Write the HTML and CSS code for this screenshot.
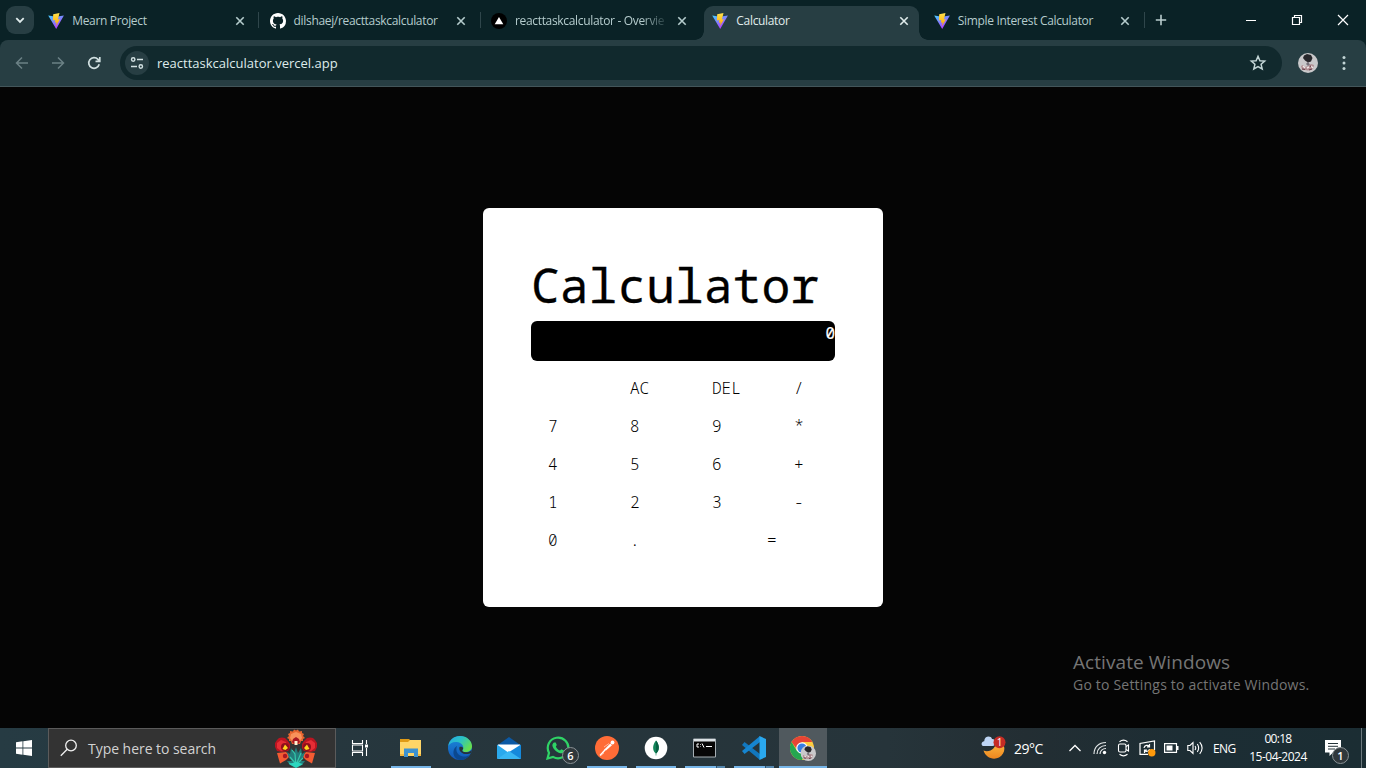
FILE: index.html
```html
<!DOCTYPE html>
<html lang="en">
<head>
<meta charset="utf-8">
<title>Calculator</title>
<link rel="stylesheet" href="styles.css">
</head>
<body>
<svg class="defs" width="0" height="0" aria-hidden="true">
  <defs>
    <linearGradient id="vg" x1="0" y1="0" x2="0.6" y2="1"><stop offset="0" stop-color="#41d1ff"/><stop offset="1" stop-color="#bd34fe"/></linearGradient>
    <linearGradient id="vb" x1="0" y1="0" x2="0" y2="1"><stop offset="0" stop-color="#ffe04a"/><stop offset="1" stop-color="#ffa800"/></linearGradient>
    <symbol id="vite" viewBox="0 0 16 16"><path d="M.2 2.4 8.2 16 15.9 2.4 8 3.7Z" fill="url(#vg)"/><path d="M11.5.1 5.2 1.2 4.900 7.500 7.300 7.100 6.900 9.700 8.600 9.200 8 13 12 6.200 9.900 6.500Z" fill="url(#vb)"/></symbol>
    <symbol id="close" viewBox="0 0 16 16"><path d="M4.3 4.3 11.7 11.7M11.7 4.3 4.3 11.7" stroke="currentColor" stroke-width="1.6" fill="none"/></symbol>
    <symbol id="face" viewBox="0 0 20 20"><circle cx="10" cy="10" r="10" fill="#c9c8ca"/><path d="M6 2.5 9 1l4 1 1.5 3-1.5 3.5-3 1-3-2-2-2.500Z" fill="#28272b"/><path d="M10 8.500 12 12l-2 1-2-2Z" fill="#77717a"/><path d="M3 13 5 12l2 2 3-1 3-2 3 1-1 4-5 1.500-6-1Z" fill="#b08e92"/><path d="M5 13l2 2M9 15l2-1M13 13l2 2" stroke="#f0e6e6" stroke-width="1.400"/><path d="M4 16l3 .5M11 17l3-1M12 13l1 .5" stroke="#693c4a" stroke-width="1.200"/></symbol>
  </defs>
</svg>
<div class="screen">
  <header class="tabstrip">
    <button class="tabsearch"><svg width="12" height="12" viewBox="0 0 12 12"><path d="M2.300 4.200 6 7.900 9.700 4.200" fill="none" stroke="#e0ecec" stroke-width="1.800"/></svg></button>
    <div class="tabs">
      <div class="tab sep"><svg class="fav"><use href="#vite"/></svg><span class="title"><span>Mearn Project</span></span><svg class="x"><use href="#close"/></svg></div>
      <div class="tab sep"><svg class="fav" viewBox="0 0 16 16"><path fill="#fff" d="M8 0C3.580 0 0 3.580 0 8c0 3.540 2.290 6.530 5.470 7.590.4.070.550-.170.550-.380 0-.190-.010-.820-.010-1.490-2.010.370-2.530-.490-2.690-.940-.090-.230-.480-.940-.820-1.130-.280-.150-.680-.520-.010-.530.630-.010 1.080.580 1.230.820.720 1.210 1.870.870 2.330.660.070-.520.280-.870.510-1.070-1.780-.200-3.640-.890-3.640-3.950 0-.870.310-1.590.820-2.150-.080-.200-.360-1.020.080-2.120 0 0 .670-.210 2.200.820.640-.180 1.320-.270 2-.270s1.360.090 2 .270c1.530-1.040 2.200-.820 2.200-.820.440 1.100.160 1.920.080 2.120.510.560.820 1.270.820 2.150 0 3.070-1.870 3.750-3.650 3.950.290.250.540.730.540 1.480 0 1.070-.010 1.930-.010 2.200 0 .210.150.460.550.380A8.010 8.010 0 0 0 16 8c0-4.420-3.580-8-8-8Z"/></svg><span class="title"><span>dilshaej/reacttaskcalculator</span></span><svg class="x"><use href="#close"/></svg></div>
      <div class="tab"><svg class="fav" viewBox="0 0 16 16"><circle cx="8" cy="8" r="8" fill="#000"/><path d="M8 4 12.300 11.200H3.700Z" fill="#fff"/></svg><span class="title fade"><span>reacttaskcalculator - Overvie</span></span><svg class="x"><use href="#close"/></svg></div>
      <div class="tab active"><svg class="fav"><use href="#vite"/></svg><span class="title"><span>Calculator</span></span><svg class="x"><use href="#close"/></svg></div>
      <div class="tab sep"><svg class="fav"><use href="#vite"/></svg><span class="title"><span>Simple Interest Calculator</span></span><svg class="x"><use href="#close"/></svg></div>
    </div>
    <svg class="plus" width="12" height="12" viewBox="0 0 12 12"><path d="M6 .8V11.200M.8 6H11.200" stroke="#b9cdce" stroke-width="1.600"/></svg>
    <div class="winbtns">
      <svg width="12" height="12" viewBox="0 0 12 12"><path d="M1 6.500H11" stroke="#fff"/></svg>
      <svg width="12" height="12" viewBox="0 0 12 12"><path d="M1.500 3.500H8.500V10.500H1.500ZM3.500 3.500V1.500H10.500V8.500H8.500" fill="none" stroke="#fff" stroke-width="1.200"/></svg>
      <svg width="12" height="12" viewBox="0 0 12 12"><path d="M1 1 11 11M11 1 1 11" stroke="#fff" stroke-width="1.200"/></svg>
    </div>
  </header>
  <nav class="toolbar">
    <div class="navicons">
      <svg width="16" height="16" viewBox="0 0 16 16" class="dim"><path d="M14 8H3M8 2.500 2.500 8 8 13.500"/></svg>
      <svg width="16" height="16" viewBox="0 0 16 16" class="dim"><path d="M2 8H13M8 2.500 13.500 8 8 13.500"/></svg>
      <svg width="16" height="16" viewBox="0 0 16 16" class="lit"><path d="M13.200 9.300A5.300 5.300 0 1 1 12 4.400L13.300 5.800M13.800 2V6.300H9.500"/></svg>
    </div>
    <div class="omnibox">
      <span class="site"><svg width="16" height="16" viewBox="0 0 16 16"><path d="M8 4.500H14M2 11.500H8" stroke="#d3e2e3" stroke-width="1.500"/><circle cx="4.200" cy="4.500" r="1.700" fill="none" stroke="#d3e2e3" stroke-width="1.400"/><circle cx="11.800" cy="11.500" r="1.700" fill="none" stroke="#d3e2e3" stroke-width="1.400"/></svg></span>
      <span class="url">reacttaskcalculator.vercel.app</span>
      <svg class="star" width="18" height="18" viewBox="0 0 18 18"><path d="M9 2.300 10.900 6.700 15.700 7.100 12.100 10.300 13.200 15 9 12.500 4.800 15 5.900 10.300 2.300 7.100 7.100 6.700Z" fill="none" stroke="#c3d5d6" stroke-width="1.500"/></svg>
    </div>
    <svg class="avatar" width="20" height="20"><use href="#face"/></svg>
    <svg class="dots" width="4" height="16" viewBox="0 0 4 16"><g fill="#c3d5d6"><circle cx="2" cy="2.600" r="1.500"/><circle cx="2" cy="8" r="1.500"/><circle cx="2" cy="13.400" r="1.500"/></g></svg>
  </nav>
  <main class="page">
    <section class="card">
      <h1>Calculator</h1>
      <div class="display">0</div>
      <div class="keys">
        <span></span><span>AC</span><span>DEL</span><span>/</span>
        <span>7</span><span>8</span><span>9</span><span>*</span>
        <span>4</span><span>5</span><span>6</span><span>+</span>
        <span>1</span><span>2</span><span>3</span><span>-</span>
        <span>0</span><span>.</span><span class="eq">=</span>
      </div>
    </section>
    <aside class="activate"><p class="a1">Activate Windows</p><p class="a2">Go to Settings to activate Windows.</p></aside>
  </main>
  <footer class="taskbar">
    <div class="start"><svg width="16" height="16" viewBox="0 0 16 16"><path fill="#fff" d="M0 2.200 6.500 1.300V7.500H0ZM7.300 1.200 16 0V7.500H7.300ZM0 8.400H6.500V14.700L0 13.800ZM7.300 8.400H16V16L7.300 14.800Z"/></svg></div>
    <div class="search">
      <svg width="18" height="18" viewBox="0 0 18 18"><circle cx="11" cy="6.500" r="5.300" fill="none" stroke="#f0f0f0" stroke-width="1.300"/><path d="M7.200 10.300.8 16.800" stroke="#f0f0f0" stroke-width="1.300"/></svg>
      <span class="ph">Type here to search</span>
      <svg class="flower" width="44" height="39" viewBox="0 0 44 39">
        <path d="M14 5 16 4 16 2 19 2.500 20 .5 22 1.500 24 .5 25 2.500 28 2 28 4 30 5 29 7 31 9 29 10 29 12 27 12 26 15H18L17 12 15 12 15 10 13 9 15 7Z" fill="#e8662f"/>
        <path d="M17 5 22 3 27 5 28 9 25 13H19L16 9Z" fill="#f9925b"/><path d="M18 13 19 10 22 8 25 10 26 13 24 15H20Z" fill="#a81722"/><path d="M20.500 12h3v4h-3Z" fill="#fff0cf"/>
        <path d="M1 14 3 11 5 9 8 8.500 11 9 14 12 16 15 16 19 14 22 8 23 3 22 1 18Z" fill="#b91521"/><path d="M43 14 41 11 39 9 36 8.500 33 9 30 12 28 15 28 19 30 22 36 23 41 22 43 18Z" fill="#b91521"/>
        <path d="M3 14 7 11 12 13 14 18 12 21 7 22 3 19Z" fill="#e62d35"/><path d="M41 14 37 11 32 13 30 18 32 21 37 22 41 19Z" fill="#e62d35"/>
        <circle cx="11" cy="18" r="4" fill="#8f0f1a"/><circle cx="33" cy="18" r="4" fill="#8f0f1a"/>
        <path d="M11 15.500 14 19 11.500 21 8.500 20Z" fill="#ffd51e"/><path d="M33 15.500 35.500 20 32 21 30 19Z" fill="#ffd51e"/>
        <path d="M3 24 12 23 16 27 12 31 6 34.500Z" fill="#f45b32"/><path d="M41 24 32 23 28 27 32 31 38 34.500Z" fill="#f45b32"/>
        <circle cx="11" cy="27" r="2.200" fill="#a81722"/><circle cx="33" cy="27" r="2.200" fill="#a81722"/>
        <path d="M22 18 24 24 27 19 28 25 31 23 29 29 26 32 31 32 28 36 22 39 16 36 13 32 18 32 15 29 13 23 16 25 17 19 20 24Z" fill="#237c7b"/>
        <path d="M22 38 21 25 18 21M22 36 27 24M22 35 16 28M22 36 29 29M22 37 15 34" stroke="#35c9ad" stroke-width="1.200" fill="none"/><path d="M15 35 22 33 29 35 22 39Z" fill="#2cd7bf"/>
      </svg>
    </div>
    <div class="taskview"><svg width="18" height="16" viewBox="0 0 18 16"><path d="M1.500 0V3.500H11.500V0M1.500 16V12.500H11.500V16M1.500 5H11.500V11H1.500ZM15.500 0V4M15.500 8V16" fill="none" stroke="#fff" stroke-width="1.100"/><path d="M14 4.500h3v3h-3Z" fill="#fff"/></svg></div>
    <div class="apps">
      <div class="app open"><svg width="24" height="24" viewBox="0 0 24 24"><path d="M1 3H10L12 5H22V20H1Z" fill="#e09b16"/><path d="M1 6H9L11 4H22V20H1Z" fill="#ffd567"/><path d="M5 21V12.500H19V21H15V17H9V21Z" fill="#3e92d0"/><path d="M1 20H5V18H1ZM19 20h3v-2h-3Z" fill="#f3b73e"/></svg></div>
      <div class="app"><svg width="24" height="24" viewBox="0 0 24 24"><defs><linearGradient id="e1" x2="1" y2=".6"><stop stop-color="#26a8e6"/><stop offset=".5" stop-color="#2bc2c5"/><stop offset="1" stop-color="#67df4c"/></linearGradient><linearGradient id="e2" x2="0" y2="1"><stop stop-color="#1b8bdc"/><stop offset="1" stop-color="#1255b6"/></linearGradient></defs><circle cx="12" cy="12" r="12" fill="url(#e2)"/><path d="M.3 10C1 4 6 0 12 0c7 0 12 5 12 10 0 4-3 6-6.500 6-2 0-3.200-.6-3.200-1.500 0-.7 1-1.100 1-2.700C15.300 8 11.500 6 7.500 6 4 6 1.500 8 .3 10Z" fill="url(#e1)"/><path d="M9 10c-2 5 1 10 6 10.500 3 .3 5-.3 7.300-2C20 22 16 24 12.500 24 7 23.500 5 19 5.500 15.500 5.800 13 7 11 9 10Z" fill="#0b488f"/><path d="M11.500 11C10.500 14 13 17.500 17 18c3 .2 4.500-.3 5.800-.8L24 14C22 16 20 16.500 17.500 16.300c-2.200-.2-3.200-.8-3.200-1.800 0-.7.900-1.300.9-2.500-.7-1.200-2.500-1.700-3.700-1Z" fill="#263238"/></svg></div>
      <div class="app"><svg width="26" height="24" viewBox="0 0 26 24"><path d="M1 9.500 13 1 25 9.500V16H1Z" fill="#0c59a4"/><path d="M2 8.500H24V17H2Z" fill="#fff"/><path d="M1 8.500 13 17 1 23Z" fill="#2aa9ed"/><path d="M25 8.500 10 18 25 23Z" fill="#1589dc"/><path d="M1 23 13 15 25 23Z" fill="#38b6f3"/></svg></div>
      <div class="app"><svg width="24" height="24" viewBox="0 0 24 24"><path d="M1.500 22.500 3 16.800A10.300 10.300 0 1 1 7 20.900Z" fill="none" stroke="#2fd366" stroke-width="2.200"/><path d="M8 6.500 9.700 6.400 10.800 9 9.800 10.500C10.800 12.700 12 13.700 14 14.600L15.300 13.200 18 14.400C18 17 15.500 17.700 13.500 17 10 16 7 12.500 6.400 9.800 6.200 8.400 7 7.200 8 6.500Z" fill="#2fd366"/></svg><span class="badge">6</span></div>
      <div class="app open"><svg width="24" height="24" viewBox="0 0 24 24"><circle cx="12" cy="12" r="12" fill="#ff6c37"/><path d="M5 19.500 10 14" stroke="#fff" stroke-width="1.400"/><path d="M8.800 14 15.300 7.500 17 9.200 11 14.500Z" fill="#fff"/><circle cx="17.500" cy="6.500" r="1.900" fill="#fff"/><path d="M9 11 14 7.500M5 20 9 17" stroke="#ffd7c8" stroke-width=".7"/></svg></div>
      <div class="app open"><svg width="24" height="24" viewBox="0 0 24 24"><circle cx="12" cy="12" r="11.300" fill="#fff"/><path d="M12 4.500C16 9.500 15.500 14.500 12.300 17.500V19.500H11.700V17.500C8.500 14.500 8 9.500 12 4.500Z" fill="#128458"/><path d="M12 4.500C16 9.500 15.500 14.500 12 17.500Z" fill="#086044"/></svg></div>
      <div class="app open multi"><svg width="24" height="20" viewBox="0 0 24 20"><path d="M.5 1H22.500V19H.5Z" fill="#070707" stroke="#a6afb4"/><path d="M1 1H22V3.500H1Z" fill="#dce2e5"/><path d="M6 6H4V9H6M7.500 6.300V7M7.500 8.500V9M9 5.500 11 9.500M13 8.500H19" stroke="#fff" fill="none"/></svg></div>
      <div class="app open multi"><svg width="24" height="24" viewBox="0 0 24 24"><path d="M2.500 6 18 18V24L0 9Z" fill="#1277be"/><path d="M0 15 18 0V6L2.500 18Z" fill="#1685d0"/><path d="M17.500 0 24 3V21L17.500 24Z" fill="#2aa8ee"/></svg></div>
      <div class="app current"><svg width="26" height="26" viewBox="0 0 26 26"><circle cx="12" cy="13" r="12" fill="#ffcd40"/><path d="M1.600 7A12 12 0 0 1 22.400 7H12L9 17Z" fill="#e74435"/><path d="M1.600 7A12 12 0 0 0 12 25L17 16 7 16Z" fill="#25a650"/><circle cx="12" cy="13" r="5.800" fill="#fff"/><circle cx="12" cy="13" r="4.600" fill="#377de2"/><svg x="10.500" y="10.500" width="15.500" height="15.500"><use href="#face"/></svg></svg></div>
    </div>
    <div class="tray">
      <svg class="weather" width="25" height="24" viewBox="0 0 25 24"><defs><linearGradient id="mg" x2="0" y2="1"><stop stop-color="#ffc447"/><stop offset="1" stop-color="#ef861f"/></linearGradient></defs><path d="M15.500 3C25 6 26 17 18 21.500 12 24.500 4.500 21.500 2.500 14.500 9 17 16 12 15.500 3Z" fill="url(#mg)"/><path d="M3 10C-.5 10 0 5.500 3.200 5.300 3.500-.5 10-.5 11 3 15 2.500 15.500 10 11.500 10Z" fill="#bed5f5"/><circle cx="18.500" cy="6.200" r="6" fill="#c52c25"/><text x="18.500" y="9.800" text-anchor="middle" class="wn">1</text></svg>
      <span class="temp">29°C</span>
      <svg class="chev" width="14" height="8" viewBox="0 0 14 8"><path d="M1.500 7 7 1.500 12.500 7" fill="none" stroke="#fff" stroke-width="1.300"/></svg>
      <svg class="wifi" width="14" height="14" viewBox="0 0 14 14"><g fill="none" stroke="#e4e8e9" stroke-width="1.200"><path d="M1 13C1 6 6 1.500 13 1.500M4 13C4 8 8 4.500 13 4.500M7 13C7 10 9.500 7.500 13 7.500" /></g><circle cx="11.500" cy="11.500" r="1.700" fill="#fff"/></svg>
      <svg class="cam" width="14" height="18" viewBox="0 0 14 18"><g fill="none" stroke="#fff" stroke-width="1.100"><rect x="1.500" y="5" width="7.500" height="8" rx="1.500"/><path d="M9 7.500 11.500 6V12L9 10.500M2.500 2.700C5 .8 8 .8 10.500 2.700M2.500 15.300C5 17.200 8 17.200 10.500 15.300"/></g></svg>
      <svg class="upd" width="17" height="17" viewBox="0 0 17 17"><g fill="none" stroke="#fff" stroke-width="1.200"><path d="M9 14.300H1V3.500L15.500 1V10"/><path d="M5 8C5.500 5 9 4.500 10.500 6.500M10.500 4V6.800H8M10.500 9C10 11.500 7 12 5.500 10.500M5.500 13V10H8"/></g><circle cx="12.800" cy="12.700" r="3.700" fill="#ff9a0c"/></svg>
      <svg class="bat" width="15" height="10" viewBox="0 0 15 10"><path d="M.6.600H12.500V9.400H.6Z" fill="none" stroke="#fff" stroke-width="1.200"/><path d="M2.500 2.500H8.500V7.500H2.500ZM13 3H14.500V7H13Z" fill="#fff"/></svg>
      <svg class="vol" width="17" height="14" viewBox="0 0 17 14"><g fill="none" stroke="#fff" stroke-width="1.100"><path d="M.8 4.500H3L6 1.500V12.500L3 9.500H.8ZM8 5Q9.500 7 8 9M10.300 3Q13 7 10.300 11M12.700 1.200Q17.500 7 12.700 12.800"/></g></svg>
      <span class="eng">ENG</span>
      <span class="clock"><span class="c1">00:18</span><span class="c2">15-04-2024</span></span>
      <span class="notif"><svg width="16" height="16" viewBox="0 0 16 16"><path d="M0 0H16V12.500H8L4.500 16V12.500H0Z" fill="#fff"/><path d="M3 3.500H13M3 6.300H13M3 9H10" stroke="#26343a"/></svg><span class="badge">1</span></span>
    </div>
  </footer>
</div>
</body>
</html>
```
FILE: styles.css
```css
* { box-sizing: border-box; }
body { margin: 0; background: #fff; font-family: "Open Sans", "Noto Sans", sans-serif; }
.defs { display: block; position: absolute; }
svg { display: block; flex: none; }
.screen { width: 1366px; height: 768px; display: flex; flex-direction: column; background: #0a2226; overflow: hidden; }

.tabstrip { height: 40px; flex: none; display: flex; align-items: center; padding-left: 6px; color: #b5cccd; }
.tabsearch { width: 28px; height: 28px; border: 0; padding: 0; border-radius: 9px; background: #273e43; display: flex; align-items: center; justify-content: center; }
.tabs { display: flex; gap: 6.400px; padding-left: 6.200px; height: 40px; align-items: flex-end; }
.tab { width: 215px; height: 34px; padding: 0 7.500px 5px 8px; display: flex; align-items: center; gap: 8px; position: relative; font-size: 12px; letter-spacing: -.33px; }
.tab.sep::after { content: ""; position: absolute; right: -4px; top: 6px; width: 1px; height: 16px; background: #2f464b; }
.fav { width: 16px; height: 16px; }
.title { flex: 1; white-space: nowrap; line-height: 18px; }
.title.fade { -webkit-mask-image: linear-gradient(90deg, #000 84%, transparent 102%); mask-image: linear-gradient(90deg, #000 84%, transparent 102%); }
.x { width: 16px; height: 16px; }
.active { background: #273e43; border-radius: 9px 9px 0 0; color: #e0ecec; }
.active::before, .active::after { content: ""; position: absolute; bottom: 0; width: 9px; height: 9px; }
.active::before { left: -9px; background: radial-gradient(circle at 0 0, transparent 8.500px, #273e43 9px); }
.active::after { right: -9px; background: radial-gradient(circle at 100% 0, transparent 8.500px, #273e43 9px); }
.plus { margin-left: 14px; }
.winbtns { margin-left: auto; display: flex; gap: 34px; padding-right: 17px; }

.toolbar { height: 47px; flex: none; display: flex; align-items: center; background: #273e43; border-bottom: 1px solid #43565a; border-radius: 8px 8px 0 0; padding-left: 14px; }
.navicons { display: flex; gap: 20px; width: 106px; }
.navicons path { fill: none; stroke-width: 1.500; }
.dim path { stroke: #6b8185; }
.lit path { stroke: #d0dfe0; stroke-width: 1.700; }
.omnibox { width: 1162px; height: 34px; border-radius: 17px; background: #11292d; display: flex; align-items: center; padding: 0 15px 0 5px; }
.site { width: 24px; height: 24px; border-radius: 12px; background: #273e43; display: flex; align-items: center; justify-content: center; }
.url { margin-left: 8px; font-size: 13px; color: #deebeb; white-space: nowrap; }
.star { margin-left: auto; }
.avatar { margin-left: 16px; }
.dots { margin-left: 24px; }

.page { flex: 1; background: #050505; position: relative; display: flex; justify-content: center; align-items: flex-start; padding-top: 121px; }
.card { width: 400px; height: 399px; background: #fff; border-radius: 6px; padding: 48px; font-family: "Noto Sans Mono", "Noto Mono", "Liberation Mono", monospace; color: #000; }
h1 { margin: 0; font-weight: 400; font-size: 48px; line-height: 58px; height: 65px; white-space: nowrap; -webkit-text-stroke: .3px #000; }
.display { height: 40px; border-radius: 6px; background: #000; color: #fff; text-align: right; font-size: 16px; line-height: 24px; -webkit-text-stroke: .2px #fff; }
.keys { display: grid; grid-template-columns: repeat(4, 82px); grid-auto-rows: 38px; padding-top: 8px; font-size: 16px; line-height: 38px; font-weight: 350; color: #000; }
.keys span { padding-left: 17px; white-space: nowrap; }
.keys .eq { grid-column: span 2; padding-left: 72px; }
.activate { position: absolute; left: 1073px; top: 563px; color: #757575; white-space: nowrap; }
.activate p { margin: 0; }
.a1 { font-size: 19px; line-height: 25px; letter-spacing: .07px; }
.a2 { font-size: 14px; line-height: 20px; letter-spacing: .2px; }

.taskbar { height: 40px; flex: none; display: flex; background: linear-gradient(90deg, #263b43 0, #26363d 30%, #26343a 65%, #232e33 75%, #1c2d34 88%, #1b2d33 100%); color: #fff; }
.start { width: 48px; display: flex; align-items: center; justify-content: center; }
.search { width: 288px; background: #333; border: 1px solid #5b5b5b; display: flex; align-items: center; padding: 0 17px 0 11px; }
.ph { margin-left: 10px; font-size: 14px; letter-spacing: -.04px; color: #d2d2d2; white-space: nowrap; }
.flower { margin-left: auto; }
.taskview { width: 51px; padding-left: 15px; display: flex; align-items: center; }
.apps { display: flex; gap: 1px; }
.app { width: 48px; display: flex; align-items: center; justify-content: center; position: relative; }
.open::after, .current::after { content: ""; position: absolute; left: 4px; right: 4px; bottom: 0; height: 2px; background: #76b5e8; }
.multi::after { background: linear-gradient(90deg, #76b5e8 31px, #31536c 31px, #31536c 32px, #5486ad 32px); }
.current { background: #50595e; }
.current::after { left: 0; right: 0; }
.badge { position: absolute; width: 17px; height: 17px; border-radius: 50%; border: 1px solid #899195; background: #30383c; color: #fff; font-size: 11px; line-height: 15px; text-align: center; font-weight: 600; }
.app .badge { left: 28px; top: 19px; }
.tray { margin-left: auto; display: flex; align-items: center; width: 385px; font-size: 12px; white-space: nowrap; }
.wn { font-size: 10px; fill: #fff; font-family: "Open Sans", sans-serif; }
.temp { width: 54px; padding-left: 8px; font-size: 14px; letter-spacing: -.5px; }
.chev { margin-left: 8px; }
.wifi { margin-left: 11px; }
.cam { margin-left: 10px; }
.upd { margin-left: 8px; }
.bat { margin-left: 8px; }
.vol { margin-left: 8px; }
.eng { margin-left: 9px; width: 24px; letter-spacing: -.6px; }
.clock { width: 60px; margin-left: 11px; display: flex; flex-direction: column; align-items: center; line-height: 18px; letter-spacing: -.5px; }
.c1 { letter-spacing: -.7px; }
.notif { position: relative; margin-left: 17px; height: 40px; width: 37px; flex: none; border-right: 1px solid #6c797e; padding-top: 12px; }
.notif .badge { left: 7px; top: 19px; }
```
